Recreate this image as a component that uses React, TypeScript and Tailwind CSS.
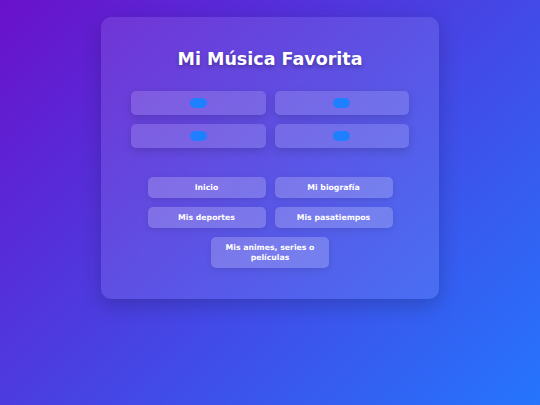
export default function App() {
  const buttons = ["Inicio", "Mi biografía", "Mis deportes", "Mis pasatiempos", "Mis animes, series o películas"];

  return (
    <div className="min-h-[405px] w-full bg-[linear-gradient(135deg,#6a11cb_0%,#2575fc_100%)] pt-[17px] font-['DejaVu_Sans',sans-serif]">
      <div className="mx-auto w-[338px] rounded-[10px] bg-white/10 px-[30px] pt-[32px] pb-[31px] shadow-[0_6px_20px_rgba(0,0,0,0.2)]">
        <h1 className="mb-[21px] text-center text-[17.5px] leading-[21px] font-bold text-white [text-shadow:0_2px_4px_rgba(0,0,0,0.3)]">
          Mi Música Favorita
        </h1>

        <div className="grid grid-cols-2 gap-[9px]">
          {[0, 1, 2, 3].map((i) => (
            <div
              key={i}
              className="flex h-[24px] items-center justify-center rounded-[5px] bg-white/15 shadow-[0_3px_8px_rgba(0,0,0,0.15)]"
            >
              <span className="h-[10px] w-[17px] rounded-full bg-[#1e7fff]" />
            </div>
          ))}
        </div>

        <div className="mt-[29px] flex flex-wrap justify-center gap-[9px]">
          {buttons.map((b) => (
            <button
              key={b}
              className="w-[118px] rounded-[5px] bg-white/20 px-[10px] py-[5.5px] text-center text-[7.75px] leading-[10px] font-bold text-white shadow-[0_2px_6px_rgba(0,0,0,0.1)]"
            >
              {b}
            </button>
          ))}
        </div>
      </div>
    </div>
  );
}
